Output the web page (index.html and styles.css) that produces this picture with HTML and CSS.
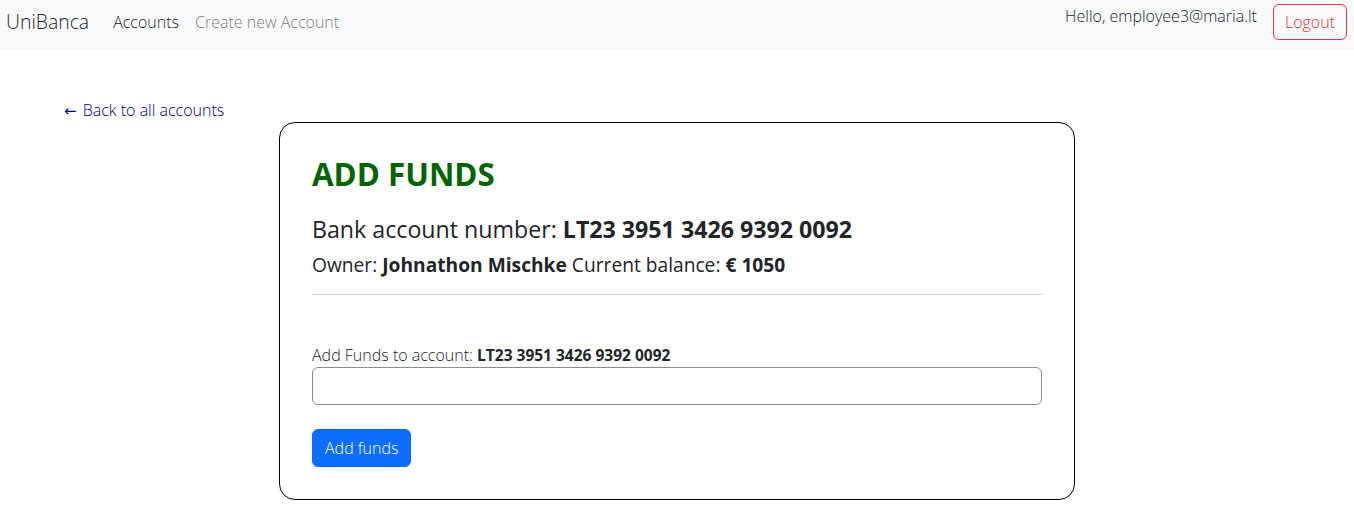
FILE: index.html
```html
<!DOCTYPE html>
<html lang="en">
<head>
<meta charset="utf-8">
<title>UniBanca - Add funds</title>
<link rel="stylesheet" href="styles.css">
</head>
<body>
<nav class="navbar">
  <a class="brand" href="#">UniBanca</a>
  <ul class="nav">
    <li><a class="nav-link active" href="#">Accounts</a></li>
    <li><a class="nav-link" href="#">Create new Account</a></li>
  </ul>
  <div class="user">
    <span class="hello">Hello, employee3@maria.lt</span>
    <button class="btn-logout" type="button">Logout</button>
  </div>
</nav>
<main class="page">
  <a class="back" href="#"><span class="arrow">&larr;</span> Back to all accounts</a>
  <section class="card">
    <h2 class="title">ADD FUNDS</h2>
    <h4 class="acc">Bank account number: <strong>LT23 3951 3426 9392 0092</strong></h4>
    <h5 class="owner">Owner: <strong>Johnathon Mischke</strong> Current balance: <strong>&euro; 1050</strong></h5>
    <hr class="sep">
    <form class="form">
      <label class="label" for="amount">Add Funds to account: <strong>LT23 3951 3426 9392 0092</strong></label>
      <input class="input" id="amount" type="text">
      <button class="btn-primary" type="button">Add funds</button>
    </form>
  </section>
</main>
</body>
</html>
```
FILE: styles.css
```css
* { box-sizing: border-box; }
html, body { margin: 0; padding: 0; }
body {
  font-family: "Open Sans", "Noto Sans", sans-serif;
  font-weight: 300;
  font-size: 16px;
  line-height: 24px;
  color: #212529;
  background: #fff;
}
strong { font-weight: 700; }

.navbar {
  display: flex;
  align-items: center;
  height: 50px;
  padding: 0 7px 6px 6px;
  background: #f8f9fa;
}
.brand {
  font-size: 19.4px;
  line-height: 30px;
  color: rgba(0,0,0,.9);
  text-decoration: none;
  margin-right: 16px;
}
.nav {
  display: flex;
  list-style: none;
  margin: 0;
  padding: 0;
}
.nav-link {
  display: block;
  padding: 8px;
  color: rgba(0,0,0,.55);
  text-decoration: none;
}
.nav-link.active { color: rgba(0,0,0,.9); }

.user {
  margin-left: auto;
  display: flex;
  align-items: flex-start;
  align-self: flex-start;
  padding-top: 4px;
}
.hello {
  line-height: 22px;
  padding-top: 1px;
  color: #212529;
}
.btn-logout {
  margin-left: 16px;
  height: 36px;
  padding: 0 11px;
  font: inherit;
  color: #dc3545;
  background: transparent;
  border: 1px solid #dc3545;
  border-radius: 6px;
}

.page {
  padding-top: 48px;
}
.back {
  display: block;
  height: 24px;
  margin-left: 64px;
  color: navy;
  text-decoration: none;
  line-height: 24px;
}
.arrow {
  font-family: "DejaVu Sans", sans-serif;
  font-size: 15px;
  line-height: 1;
  font-weight: 400;
  margin-right: 2px;
}
.card {
  width: 796px;
  margin: 0 auto;
  padding: 32px;
  border: 1px solid #000;
  border-radius: 16px;
}
.title {
  margin: 0;
  font-size: 31.3px;
  line-height: 38px;
  font-weight: 700;
  color: #006400;
}
.acc {
  margin: 22px 0 0;
  font-size: 23.2px;
  line-height: 29px;
  font-weight: 400;
}
.owner {
  margin: 8px 0 0;
  font-size: 19.2px;
  line-height: 26px;
  font-weight: 400;
}
.sep {
  margin: 16px 0 0;
  border: 0;
  border-top: 1px solid #cfcfcf;
}
.form {
  display: flex;
  flex-direction: column;
  align-items: flex-start;
  margin-top: 48px;
}
.label {
  line-height: 24px;
}
.label strong { font-size: 15.5px; }
.input {
  width: 100%;
  height: 38px;
  padding: 6px 12px;
  font: inherit;
  border: 1px solid #8c8c8c;
  border-radius: 6px;
  background: #fff;
}
.btn-primary {
  margin-top: 24px;
  height: 38px;
  padding: 0 12px;
  font: inherit;
  color: #fff;
  background: #0d6efd;
  border: 1px solid #0d6efd;
  border-radius: 6px;
}
```
